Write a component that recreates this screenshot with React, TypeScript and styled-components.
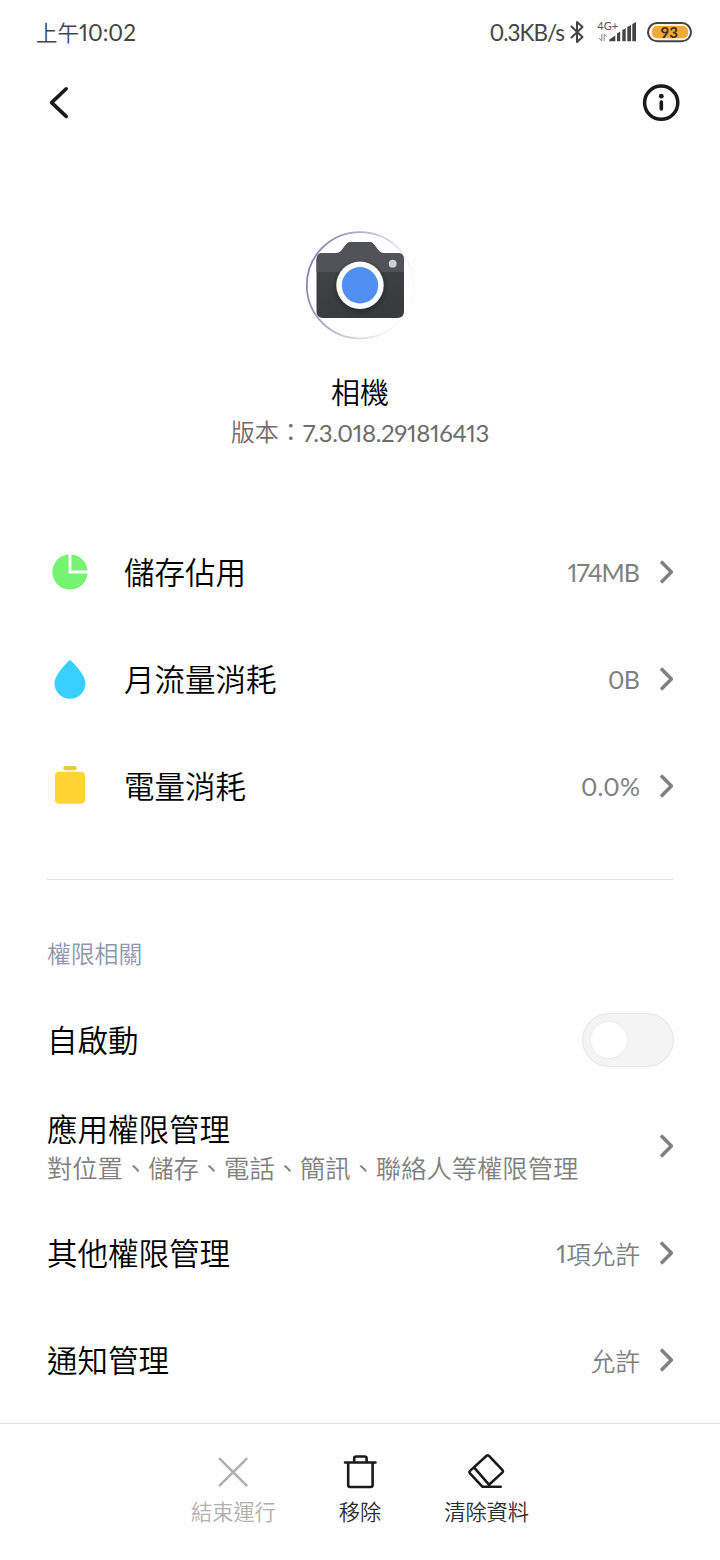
import React from "react";
import styled, { createGlobalStyle } from "styled-components";

const GlobalStyle = createGlobalStyle`
  * { box-sizing: border-box; }
  body {
    margin: 0;
    background: #fefefe;
    font-family: Lato, "Noto Sans CJK TC", sans-serif;
    font-weight: 350;
  }
`;

const cjk = `"Noto Sans CJK TC", sans-serif`;

const Screen = styled.div`
  width: 720px;
  height: 1560px;
  display: flex;
  flex-direction: column;
  overflow: hidden;
  background: #fefefe;
  color: #000;
`;

const StatusBar = styled.header`
  height: 66px;
  padding: 0 28px 0 36px;
  display: flex;
  align-items: center;
  color: #444;
  font-size: 22.5px;
  line-height: 30px;
  white-space: nowrap;
`;

const Clock = styled.div`
  flex: 1;
  display: flex;
  align-items: center;
  font-size: 21.5px;
`;

const Latin = styled.span<{ $size: number; $spacing?: number; $drop?: number }>`
  font-family: Lato, sans-serif;
  font-weight: 400;
  font-size: ${(p) => p.$size}px;
  font-variant-numeric: proportional-nums;
  letter-spacing: ${(p) => p.$spacing ?? 0}px;
  margin-right: ${(p) => -(p.$spacing ?? 0)}px;
  margin-top: ${(p) => p.$drop ?? 0}px;
  margin-bottom: ${(p) => -(p.$drop ?? 0)}px;
`;

const StatusIcons = styled.svg`
  display: block;
  margin-left: 4px;
`;

const NavBar = styled.nav`
  height: 74px;
  padding: 0 40px 0 46px;
  display: flex;
  align-items: center;
  justify-content: space-between;
`;

const Hero = styled.section`
  height: 379px;
  padding-top: 90px;
  display: flex;
  flex-direction: column;
  align-items: center;
`;

const AppName = styled.h1`
  margin: 30px 0 0;
  font: 350 29px/42px ${cjk};
`;

const Version = styled.div`
  display: flex;
  align-items: center;
  color: #6c6c6c;
  font: 350 24px/36px ${cjk};
  margin-top: 1px;
  white-space: nowrap;
`;

const List = styled.section`
  display: flex;
  flex-direction: column;
  padding: 0 46px 0 47px;
`;

const Row = styled.div`
  height: 106.67px;
  display: flex;
  align-items: center;
`;

const RowIcon = styled.svg`
  width: 46px;
  height: 46px;
  margin-right: 31px;
  flex: none;
`;

const RowText = styled.div<{ $double?: boolean }>`
  flex: 1;
  display: flex;
  flex-direction: column;
  padding-bottom: ${(p) => (p.$double ? 0 : 2)}px;
  white-space: nowrap;
`;

const RowTitle = styled.div`
  font: 350 30.5px/42px ${cjk};
`;

const RowNote = styled.div`
  color: #808080;
  font: 350 25.3px/36px ${cjk};
`;

const RowValue = styled.div`
  display: flex;
  align-items: center;
  color: #808080;
  font: 350 24.6px/36px ${cjk};
  margin-right: 19px;
`;

const Divider = styled.hr`
  height: 1.5px;
  margin: 40px 47px 0;
  border: 0;
  flex: none;
  background: #e1e1e1;
`;

const SectionLabel = styled.h2`
  margin: 0;
  height: 106px;
  padding: 55px 47px 0;
  color: #8f96b0;
  font: 350 23.8px/36px ${cjk};
`;

const Switch = styled.div`
  width: 92px;
  height: 54px;
  padding: 7px;
  margin-right: 0.5px;
  border: 1px solid #e6e6e6;
  border-radius: 27px;
  background: #f4f4f4;
`;

const Knob = styled.div`
  width: 38px;
  height: 38px;
  border: 1px solid #ececec;
  border-radius: 50%;
  background: #fff;
`;

const BottomBar = styled.footer`
  margin-top: auto;
  height: 137px;
  flex: none;
  display: flex;
  justify-content: center;
  border-top: 1.5px solid #e2e2e2;
  background: #fefefe;
`;

const Action = styled.button<{ $disabled?: boolean }>`
  width: 126.6px;
  padding: 28px 0 0;
  border: 0;
  background: none;
  display: flex;
  flex-direction: column;
  align-items: center;
  gap: 3px;
  color: ${(p) => (p.$disabled ? "#b0b0b0" : "#2c2c2c")};
  font: 350 21.2px/32px ${cjk};
  white-space: nowrap;
`;

const ActionIcon = styled.svg<{ $disabled?: boolean }>`
  width: 40px;
  height: 40px;
  fill: none;
  stroke: ${(p) => (p.$disabled ? "#b0b0b0" : "#1a1a1a")};
  stroke-width: 2.6;
  stroke-linecap: round;
  stroke-linejoin: round;
`;

const Chevron = () => (
  <svg width="15" height="26" viewBox="0 0 15 26" fill="none" stroke="#808080" strokeWidth="3.5" strokeLinejoin="round">
    <path d="M2 2.600 12.400 13 2 23.400" />
  </svg>
);

const CameraIcon = () => (
  <svg width="110" height="110" viewBox="305 230 110 110">
    <defs>
      <linearGradient id="ring" x1="0" y1="0.3" x2="1" y2="0.6">
        <stop offset="0" stopColor="#7d79ad" />
        <stop offset="0.45" stopColor="#b9b8d4" />
        <stop offset="0.85" stopColor="#f4f4f8" />
        <stop offset="1" stopColor="#fefefe" />
      </linearGradient>
      <linearGradient id="body" x1="0" y1="0" x2="0.3" y2="1">
        <stop offset="0" stopColor="#44474b" />
        <stop offset="1" stopColor="#393b3f" />
      </linearGradient>
      <radialGradient id="shade">
        <stop offset="0.75" stopColor="#202124" stopOpacity="0.5" />
        <stop offset="1" stopColor="#202124" stopOpacity="0" />
      </radialGradient>
    </defs>
    <circle cx="360" cy="285.3" r="53.2" fill="#fff" stroke="url(#ring)" strokeWidth="1.7" />
    <path d="M323 253H337Q339.5 253 341 251L346.5 244Q348 242 351 242H369.500Q372 242 373.500 244L379 251Q380.500 253 383 253H397.500Q404 253 404 259.500V311.500Q404 318 397.500 318H323Q316.500 318 316.500 311.500V259.500Q316.500 253 323 253Z" fill="url(#body)" />
    <path d="M323 253H337Q339.5 253 341 251L346.5 244Q348 242 351 242H369.500Q372 242 373.500 244L379 251Q380.500 253 383 253H397.500Q404 253 404 259.500V272H316.500V259.500Q316.500 253 323 253Z" fill="#505459" />
    <circle cx="360.500" cy="287.500" r="29" fill="url(#shade)" />
    <circle cx="360" cy="285.300" r="23.700" fill="#fff" />
    <circle cx="360" cy="285.300" r="18.200" fill="#5190f2" />
    <circle cx="392.700" cy="263.700" r="3.900" fill="#d0d0d0" />
  </svg>
);

export default function App() {
  return (
    <>
      <GlobalStyle />
      <Screen>
        <StatusBar>
          <Clock>
            上午<Latin $size={22.5}>10:02</Latin>
          </Clock>
          <Latin $size={22.5} $spacing={-1}>0.3KB/s</Latin>
          <StatusIcons width="123" height="30" viewBox="569 18 123 30">
            <path d="M571.500 26.500 582.500 37 577 42V22L582.500 27 571.500 37.500" fill="none" stroke="#444" strokeWidth="2" strokeLinejoin="round" strokeLinecap="round" />
            <text x="597.300" y="30" fontFamily="Lato, sans-serif" fontWeight="400" fontSize="11" fill="#555">4G+</text>
            <path d="M599 38 601.800 41V34M604.200 41V34L606.500 36.500" fill="none" stroke="#888" strokeWidth="1" />
            <path d="M609.300 41.300V39.500L615.300 35.500V41.300ZM617 41.300V33.500L620.200 31.500V41.300ZM622.300 41.300V30L625.700 28.200V41.300ZM627.300 41.300V27L631 25V41.300ZM632.300 41.300V24L636 22V41.300Z" fill="#444" />
            <rect x="648" y="23" width="43" height="18.300" rx="9.150" fill="#fff8e4" stroke="#444" strokeWidth="2" />
            <rect x="652" y="26" width="36" height="12.300" rx="5" fill="#f2a93a" />
            <text x="669.300" y="37.500" textAnchor="middle" fontFamily="Lato, sans-serif" fontWeight="700" fontSize="15" fill="#3d3019">93</text>
          </StatusIcons>
        </StatusBar>
        <NavBar>
          <svg width="26" height="40" viewBox="46 83 26 40" fill="none" stroke="#1a1a1a" strokeWidth="3.600" strokeLinecap="round" strokeLinejoin="round">
            <path d="M66.200 88.800 51.600 102.600 66.200 116.400" />
          </svg>
          <svg width="38" height="38" viewBox="642 84 38 38">
            <circle cx="661.200" cy="102.700" r="16.600" fill="none" stroke="#1a1a1a" strokeWidth="3.500" />
            <circle cx="661.300" cy="96.200" r="2.400" fill="#1a1a1a" />
            <path d="M661.300 102V109" stroke="#1a1a1a" strokeWidth="3.600" strokeLinecap="round" />
          </svg>
        </NavBar>
        <Hero>
          <CameraIcon />
          <AppName>相機</AppName>
          <Version>
            版本：<Latin $size={24} $spacing={-0.32} $drop={2}>7.3.018.291816413</Latin>
          </Version>
        </Hero>
        <List>
          <Row>
            <RowIcon viewBox="47 549 46 46">
              <circle cx="70" cy="572" r="17.600" fill="#76f370" />
              <path d="M70 553V572H89" fill="none" stroke="#fefefe" strokeWidth="2.800" />
            </RowIcon>
            <RowText><RowTitle>儲存佔用</RowTitle></RowText>
            <RowValue><Latin $size={25} $spacing={-1}>174MB</Latin></RowValue>
            <Chevron />
          </Row>
          <Row>
            <RowIcon viewBox="47 656 46 46">
              <path d="M68.800 660.700Q70 659.500 71.200 660.700C77 667 85.500 675.500 85.500 683.300A15.500 15.500 0 0 1 54.500 683.300C54.500 675.500 63 667 68.800 660.700Z" fill="#38d1ff" />
            </RowIcon>
            <RowText><RowTitle>月流量消耗</RowTitle></RowText>
            <RowValue><Latin $size={25} $spacing={-0.6}>0B</Latin></RowValue>
            <Chevron />
          </Row>
          <Row>
            <RowIcon viewBox="47 763 46 46">
              <rect x="63.300" y="766" width="13.400" height="4.300" rx="2" fill="#e9c845" />
              <rect x="55" y="771.700" width="30" height="32" rx="4" fill="#ffd535" />
            </RowIcon>
            <RowText><RowTitle>電量消耗</RowTitle></RowText>
            <RowValue><Latin $size={25} $spacing={0.2}>0.0%</Latin></RowValue>
            <Chevron />
          </Row>
        </List>
        <Divider />
        <SectionLabel>權限相關</SectionLabel>
        <List>
          <Row>
            <RowText><RowTitle>自啟動</RowTitle></RowText>
            <Switch role="switch" aria-checked="false"><Knob /></Switch>
          </Row>
          <Row>
            <RowText $double>
              <RowTitle>應用權限管理</RowTitle>
              <RowNote>對位置、儲存、電話、簡訊、聯絡人等權限管理</RowNote>
            </RowText>
            <Chevron />
          </Row>
          <Row>
            <RowText><RowTitle>其他權限管理</RowTitle></RowText>
            <RowValue><Latin $size={25}>1</Latin>項允許</RowValue>
            <Chevron />
          </Row>
          <Row>
            <RowText><RowTitle>通知管理</RowTitle></RowText>
            <RowValue>允許</RowValue>
            <Chevron />
          </Row>
        </List>
        <BottomBar>
          <Action $disabled>
            <ActionIcon $disabled viewBox="213 1452 40 40">
              <path d="M219.800 1458.800 246.500 1485.300M246.500 1458.800 219.800 1485.300" />
            </ActionIcon>
            結束運行
          </Action>
          <Action>
            <ActionIcon viewBox="340 1452 40 40">
              <path d="M345 1462.500H375.500M348.200 1462.500V1485Q348.200 1487 350.200 1487H370.600Q372.600 1487 372.600 1485V1462.500M354.200 1462V1458.500Q354.200 1456.500 356.200 1456.500H364.600Q366.600 1456.500 366.600 1458.500V1462" />
            </ActionIcon>
            移除
          </Action>
          <Action>
            <ActionIcon viewBox="467 1452 40 40">
              <path d="M500.700 1486.700H482.300L470 1473.300Q468.800 1472 470 1470.900L486.600 1455.800Q487.800 1454.700 489 1455.900L502.500 1470.200Q503.500 1471.300 502.500 1472.400L489 1484.700 474 1467.300" />
            </ActionIcon>
            清除資料
          </Action>
        </BottomBar>
      </Screen>
    </>
  );
}
